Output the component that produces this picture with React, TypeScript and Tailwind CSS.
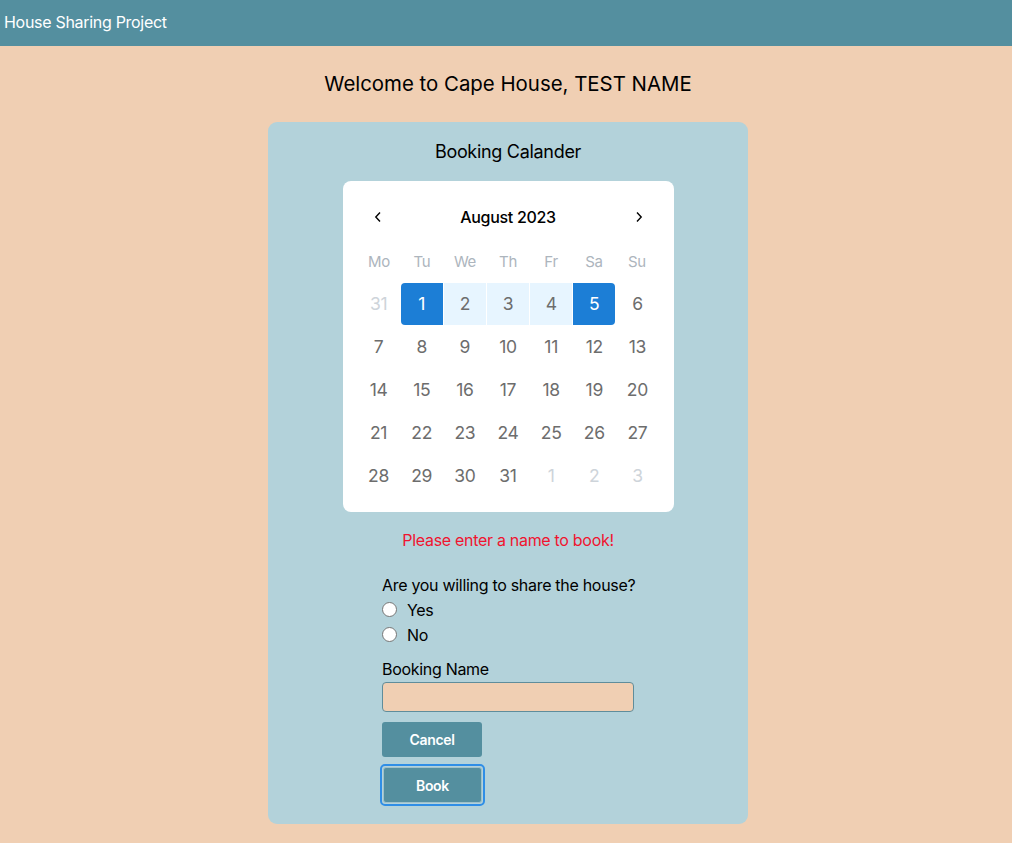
import React from "react";

const days: { d: number; out?: boolean; sel?: "start" | "end" | "mid" }[][] = [
  [{ d: 31, out: true }, { d: 1, sel: "start" }, { d: 2, sel: "mid" }, { d: 3, sel: "mid" }, { d: 4, sel: "mid" }, { d: 5, sel: "end" }, { d: 6 }],
  [7, 8, 9, 10, 11, 12, 13].map((d) => ({ d })),
  [14, 15, 16, 17, 18, 19, 20].map((d) => ({ d })),
  [21, 22, 23, 24, 25, 26, 27].map((d) => ({ d })),
  [{ d: 28 }, { d: 29 }, { d: 30 }, { d: 31 }, { d: 1, out: true }, { d: 2, out: true }, { d: 3, out: true }],
];

function Calendar() {
  return (
    <div className="w-[331px] bg-white rounded-[8px] px-[15px] pt-[24px] pb-[15px]">
      <div className="flex items-center justify-between h-[24px] px-[4px]">
        <button className="w-[32px] h-[24px] flex items-center justify-center text-black">
          <svg width="8" height="12" viewBox="0 0 8 12"><path d="M6 1.5 L1.8 6 L6 10.5" fill="none" stroke="black" strokeWidth="1.4" /></svg>
        </button>
        <div className="text-[16px] font-medium text-black">August 2023</div>
        <button className="w-[32px] h-[24px] flex items-center justify-center text-black">
          <svg width="8" height="12" viewBox="0 0 8 12"><path d="M2 1.5 L6.2 6 L2 10.5" fill="none" stroke="black" strokeWidth="1.4" /></svg>
        </button>
      </div>
      <div className="grid grid-cols-7 mt-[22px] h-[20px] items-center">
        {["Mo", "Tu", "We", "Th", "Fr", "Sa", "Su"].map((w) => (
          <div key={w} className="text-center text-[15px] text-[#adb5bd]">{w}</div>
        ))}
      </div>
      <div className="mt-[11px] flex flex-col">
        {days.map((row, i) => (
          <div key={i} className="grid grid-cols-7 gap-[1px] h-[43px] pt-[1px]">
            {row.map((c, j) => {
              let cls = "text-[#6d6d6d]";
              if (c.out) cls = "text-[#ced4da]";
              if (c.sel === "start") cls = "bg-[#1c7ed6] text-white rounded-l-[4px]";
              if (c.sel === "end") cls = "bg-[#1c7ed6] text-white rounded-r-[4px]";
              if (c.sel === "mid") cls = "bg-[#e7f5ff] text-[#6d6d6d]";
              return (
                <div key={j} className={`flex items-center justify-center text-[17.5px] h-[42px] ${cls}`}>
                  {c.d}
                </div>
              );
            })}
          </div>
        ))}
      </div>
    </div>
  );
}

export default function App() {
  return (
    <div className="min-h-[843px] bg-[#f0cfb3] font-['Inter',sans-serif] tracking-[-0.3px]">
      <div className="h-[46px] bg-[#548f9f] flex items-center px-[4px] pb-[2px]">
        <span className="text-white text-[16px]">House Sharing Project</span>
      </div>
      <div className="flex flex-col items-center pl-[4px]">
        <h1 className="mt-[25px] text-[20.4px] tracking-normal text-black h-[26px] leading-[26px]">Welcome to Cape House, TEST NAME</h1>
        <div className="mt-[25px] w-[480px] bg-[#b3d2da] rounded-[9px] flex flex-col items-center pt-[19px] pb-[18px]">
          <div className="text-[18px] text-black h-[22px] leading-[22px]">Booking Calander</div>
          <div className="mt-[18px]">
            <Calendar />
          </div>
          <div className="mt-[18px] text-[16px] text-[#f0142f] h-[20px] leading-[20px]">Please enter a name to book!</div>
          <div className="w-[252px] mt-[25px] flex flex-col text-black text-[16px]">
            <div className="h-[20px] leading-[20px] whitespace-nowrap">Are you willing to share the house?</div>
            <label className="flex items-center h-[25px] mt-[2px]">
              <span className="w-[15px] h-[15px] rounded-full border border-[#767676] bg-white"></span>
              <span className="ml-[10px]">Yes</span>
            </label>
            <label className="flex items-center h-[25px]">
              <span className="w-[15px] h-[15px] rounded-full border border-[#767676] bg-white"></span>
              <span className="ml-[10px]">No</span>
            </label>
            <div className="mt-[12px] h-[20px] leading-[20px]">Booking Name</div>
            <input className="mt-[3px] h-[30px] w-[252px] rounded-[4px] border border-[#5f8d9b] bg-[#f0cfb3] outline-none" />
            <button className="mt-[10px] w-[100px] h-[35px] rounded-[3px] bg-[#548f9f] text-white text-[14px] font-semibold">Cancel</button>
            <div className="mt-[7px] w-[105px] h-[42px] rounded-[5px] border-2 border-[#2f8ee6] p-[1px] -ml-[2px]">
              <button className="w-full h-full rounded-[3px] bg-[#548f9f] border border-[#9fc1ca] text-white text-[14px] font-semibold">Book</button>
            </div>
          </div>
        </div>
      </div>
    </div>
  );
}
